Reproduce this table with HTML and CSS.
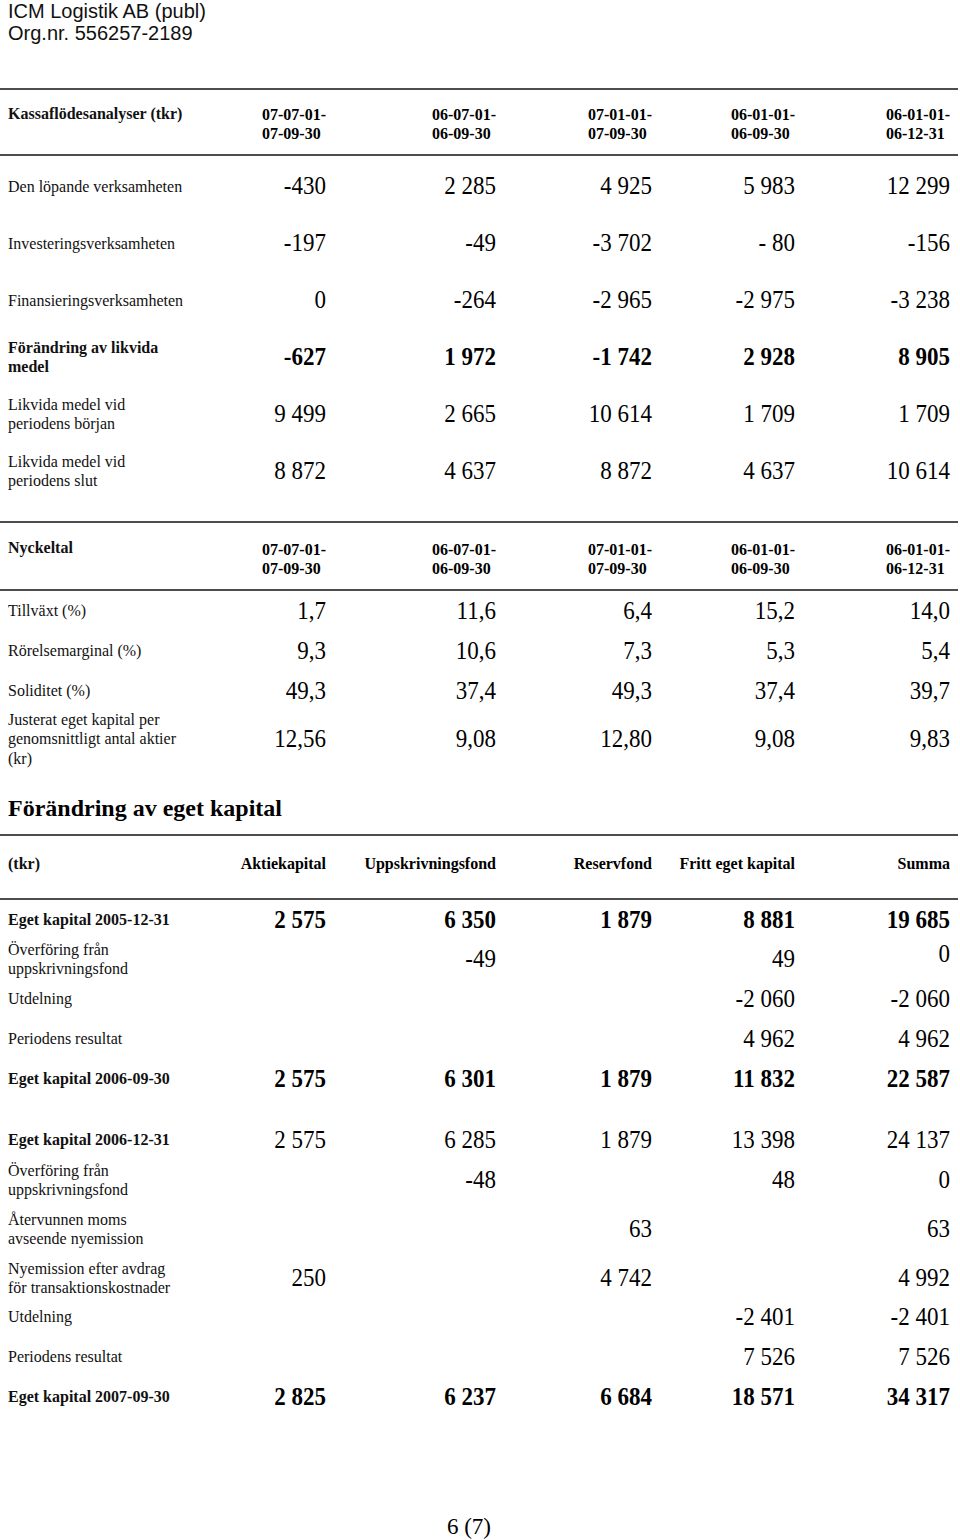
FILE: index.html
```html
<!DOCTYPE html>
<html lang="sv">
<head>
<meta charset="utf-8">
<title>ICM Logistik AB (publ) – Kassaflödesanalyser</title>
<link rel="stylesheet" href="styles.css">
</head>
<body>
<div class="page">
  <header class="doc-head">
    <div>ICM Logistik AB (publ)</div>
    <div>Org.nr. 556257-2189</div>
  </header>

  <section class="table cash">
    <div class="row head">
      <div class="label b lab-head">Kassaflödesanalyser (tkr)</div>
      <div class="period"><span>07-07-01-<br>07-09-30</span></div>
      <div class="period"><span>06-07-01-<br>06-09-30</span></div>
      <div class="period"><span>07-01-01-<br>07-09-30</span></div>
      <div class="period"><span>06-01-01-<br>06-09-30</span></div>
      <div class="period"><span>06-01-01-<br>06-12-31</span></div>
    </div>
    <div class="body">
      <div class="row">
        <div class="label">Den löpande verksamheten</div>
        <div class="num">-430</div><div class="num">2 285</div><div class="num">4 925</div><div class="num">5 983</div><div class="num">12 299</div>
      </div>
      <div class="row">
        <div class="label">Investeringsverksamheten</div>
        <div class="num">-197</div><div class="num">-49</div><div class="num">-3 702</div><div class="num">- 80</div><div class="num">-156</div>
      </div>
      <div class="row">
        <div class="label">Finansieringsverksamheten</div>
        <div class="num">0</div><div class="num">-264</div><div class="num">-2 965</div><div class="num">-2 975</div><div class="num">-3 238</div>
      </div>
      <div class="row strong">
        <div class="label b">Förändring av likvida<br>medel</div>
        <div class="num">-627</div><div class="num">1 972</div><div class="num">-1 742</div><div class="num">2 928</div><div class="num">8 905</div>
      </div>
      <div class="row">
        <div class="label">Likvida medel vid<br>periodens början</div>
        <div class="num">9 499</div><div class="num">2 665</div><div class="num">10 614</div><div class="num">1 709</div><div class="num">1 709</div>
      </div>
      <div class="row">
        <div class="label">Likvida medel vid<br>periodens slut</div>
        <div class="num">8 872</div><div class="num">4 637</div><div class="num">8 872</div><div class="num">4 637</div><div class="num">10 614</div>
      </div>
    </div>
  </section>

  <section class="table kpi">
    <div class="row head">
      <div class="label b lab-head">Nyckeltal</div>
      <div class="period"><span>07-07-01-<br>07-09-30</span></div>
      <div class="period"><span>06-07-01-<br>06-09-30</span></div>
      <div class="period"><span>07-01-01-<br>07-09-30</span></div>
      <div class="period"><span>06-01-01-<br>06-09-30</span></div>
      <div class="period"><span>06-01-01-<br>06-12-31</span></div>
    </div>
    <div class="body">
      <div class="row">
        <div class="label">Tillväxt (%)</div>
        <div class="num">1,7</div><div class="num">11,6</div><div class="num">6,4</div><div class="num">15,2</div><div class="num">14,0</div>
      </div>
      <div class="row">
        <div class="label">Rörelsemarginal (%)</div>
        <div class="num">9,3</div><div class="num">10,6</div><div class="num">7,3</div><div class="num">5,3</div><div class="num">5,4</div>
      </div>
      <div class="row">
        <div class="label">Soliditet (%)</div>
        <div class="num">49,3</div><div class="num">37,4</div><div class="num">49,3</div><div class="num">37,4</div><div class="num">39,7</div>
      </div>
      <div class="row tall">
        <div class="label">Justerat eget kapital per<br>genomsnittligt antal aktier<br>(kr)</div>
        <div class="num">12,56</div><div class="num">9,08</div><div class="num">12,80</div><div class="num">9,08</div><div class="num">9,83</div>
      </div>
    </div>
  </section>

  <h2 class="section-title">Förändring av eget kapital</h2>

  <section class="table equity">
    <div class="row head">
      <div class="label b">(tkr)</div>
      <div class="colhead">Aktiekapital</div>
      <div class="colhead">Uppskrivningsfond</div>
      <div class="colhead">Reservfond</div>
      <div class="colhead">Fritt eget kapital</div>
      <div class="colhead">Summa</div>
    </div>
    <div class="body">
      <div class="row first strong">
        <div class="label b">Eget kapital 2005-12-31</div>
        <div class="num">2 575</div><div class="num">6 350</div><div class="num">1 879</div><div class="num">8 881</div><div class="num">19 685</div>
      </div>
      <div class="row">
        <div class="label">Överföring från<br>uppskrivningsfond</div>
        <div class="num"></div><div class="num">-49</div><div class="num"></div><div class="num">49</div><div class="num raised">0</div>
      </div>
      <div class="row">
        <div class="label">Utdelning</div>
        <div class="num"></div><div class="num"></div><div class="num"></div><div class="num">-2 060</div><div class="num">-2 060</div>
      </div>
      <div class="row">
        <div class="label">Periodens resultat</div>
        <div class="num"></div><div class="num"></div><div class="num"></div><div class="num">4 962</div><div class="num">4 962</div>
      </div>
      <div class="row strong">
        <div class="label b">Eget kapital 2006-09-30</div>
        <div class="num">2 575</div><div class="num">6 301</div><div class="num">1 879</div><div class="num">11 832</div><div class="num">22 587</div>
      </div>

      <div class="row gap">
        <div class="label b">Eget kapital 2006-12-31</div>
        <div class="num">2 575</div><div class="num">6 285</div><div class="num">1 879</div><div class="num">13 398</div><div class="num">24 137</div>
      </div>
      <div class="row">
        <div class="label">Överföring från<br>uppskrivningsfond</div>
        <div class="num"></div><div class="num">-48</div><div class="num"></div><div class="num">48</div><div class="num">0</div>
      </div>
      <div class="row wide">
        <div class="label">Återvunnen moms<br>avseende nyemission</div>
        <div class="num"></div><div class="num"></div><div class="num">63</div><div class="num"></div><div class="num">63</div>
      </div>
      <div class="row narrow">
        <div class="label">Nyemission efter avdrag<br>för transaktionskostnader</div>
        <div class="num">250</div><div class="num"></div><div class="num">4 742</div><div class="num"></div><div class="num">4 992</div>
      </div>
      <div class="row">
        <div class="label">Utdelning</div>
        <div class="num"></div><div class="num"></div><div class="num"></div><div class="num">-2 401</div><div class="num">-2 401</div>
      </div>
      <div class="row">
        <div class="label">Periodens resultat</div>
        <div class="num"></div><div class="num"></div><div class="num"></div><div class="num">7 526</div><div class="num">7 526</div>
      </div>
      <div class="row strong">
        <div class="label b">Eget kapital 2007-09-30</div>
        <div class="num">2 825</div><div class="num">6 237</div><div class="num">6 684</div><div class="num">18 571</div><div class="num">34 317</div>
      </div>
    </div>
  </section>

  <footer class="page-no">6 (7)</footer>
</div>
</body>
</html>
```

FILE: styles.css
```css
html, body {
  margin: 0;
  padding: 0;
  background: #fff;
}

body {
  color: #000;
  font-family: "Liberation Serif", "Times New Roman", serif;
}

.page {
  width: 958px;
}

.doc-head {
  padding-left: 8px;
  font-family: "Liberation Sans", Arial, sans-serif;
  font-size: 20px;
  line-height: 22px;
  color: #111;
}

.table {
  display: flex;
  flex-direction: column;
}

.row {
  display: grid;
  grid-template-columns: 232px 86px 170px 156px 143px 155px;
  align-items: center;
  padding: 0 8px;
}

.label {
  font-size: 16px;
  line-height: 18px;
  color: #111;
  transform: scaleY(1.1);
}

.b {
  font-weight: bold;
}

.num {
  font-size: 23px;
  line-height: 26px;
  text-align: right;
  white-space: nowrap;
  transform: scaleY(1.08);
}

.strong .num {
  font-weight: bold;
}

.head {
  border-top: 2px solid #4d4d4d;
  border-bottom: 2px solid #4d4d4d;
  align-items: start;
}

.period {
  text-align: right;
  font-size: 16px;
  line-height: 18px;
  font-weight: bold;
  transform: scaleY(1.1);
}

.period span {
  display: inline-block;
  text-align: left;
}

.lab-head {
  line-height: 14px;
}

.colhead {
  text-align: right;
  font-size: 16px;
  line-height: 18px;
  font-weight: bold;
  transform: scaleY(1.1);
}

/* Kassaflödesanalyser */
.cash {
  margin-top: 44px;
}

.cash .head {
  padding-top: 16px;
  padding-bottom: 12px;
}

.cash .body {
  padding-top: 1px;
}

.cash .body .row {
  height: 57px;
}

/* Nyckeltal */
.kpi {
  margin-top: 22px;
}

.kpi .head {
  padding-top: 18px;
  padding-bottom: 12px;
}

.kpi .body .row {
  height: 40px;
}

.kpi .body .row.tall {
  height: 56px;
}

.section-title {
  margin: 27px 0 12px;
  padding-left: 8px;
  font-size: 24px;
  line-height: 28px;
  font-weight: bold;
}

/* Förändring av eget kapital */
.equity .head {
  align-items: center;
  padding-top: 19px;
  padding-bottom: 25px;
}

.equity .body .row {
  height: 40px;
}

.equity .body .row.first {
  height: 39px;
}

.equity .body .row.gap {
  margin-top: 21px;
}

.equity .body .row.wide {
  height: 58px;
}

.equity .body .row.narrow {
  height: 39px;
}

.num.raised {
  margin-bottom: 10px;
}

.page-no {
  margin-top: 97px;
  padding-right: 20px;
  text-align: center;
  font-size: 23px;
  line-height: 26px;
}
```
